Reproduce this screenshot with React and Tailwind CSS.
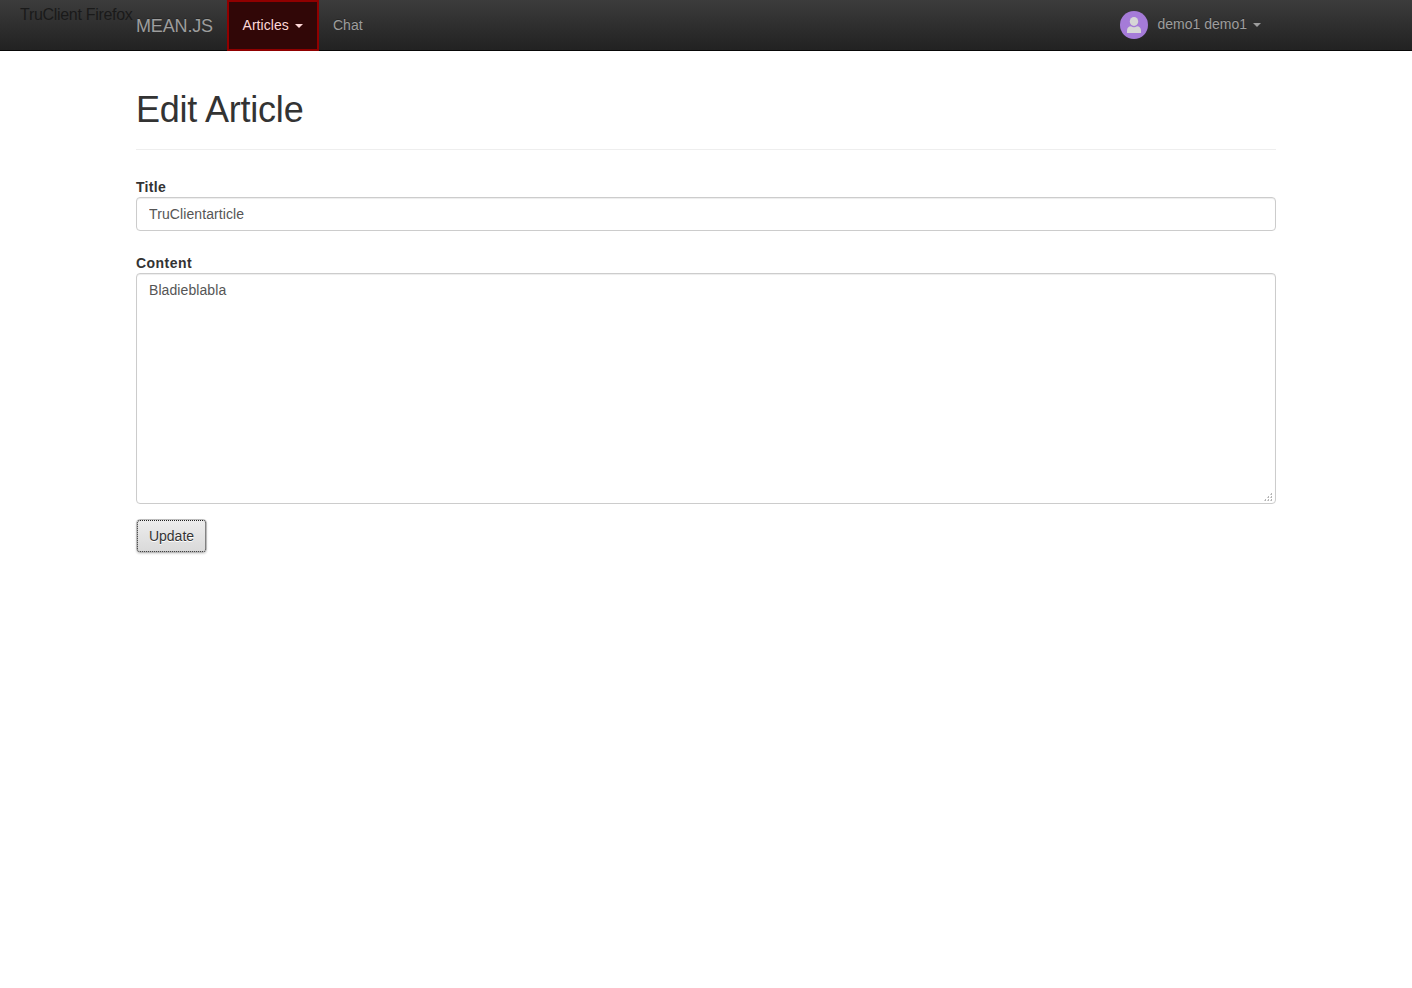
import React from "react";

function Caret() {
  return (
    <span className="ml-1.5 inline-block h-0 w-0 border-x-4 border-t-4 border-x-transparent border-t-current align-middle" />
  );
}

function Avatar() {
  return (
    <svg className="h-7 w-7" viewBox="0 0 28 28">
      <circle cx="14" cy="14" r="14" fill="#a57bd8" />
      <ellipse cx="14" cy="10.400" rx="4.200" ry="4.500" fill="#d6d6d6" />
      <path d="M7 22v-2.600C7 17 8.600 15.300 11 15.300c.8.600 1.800.900 3 .900s2.200-.3 3-.9c2.400 0 4 1.700 4 4.100V22z" fill="#d6d6d6" />
    </svg>
  );
}

function Grip() {
  return (
    <svg className="pointer-events-none absolute right-[3px] bottom-[2px] h-[9px] w-[9px]" viewBox="0 0 9 9" shapeRendering="crispEdges" fill="#b5b5b5">
      <path d="M7 0h1v2h-1zM4 3h1v2h-1zM7 3h1v2h-1zM1 6h1v2h-1zM4 6h1v2h-1zM7 6h1v2h-1z" />
      <path d="M6 1h1v1h-1zM3 4h1v1h-1zM6 4h1v1h-1zM0 7h1v1h-1zM3 7h1v1h-1zM6 7h1v1h-1z" opacity=".6" />
    </svg>
  );
}

const field =
  "block w-full rounded-[4px] border border-[#ccc] bg-white px-3 py-1.5 text-sm leading-5 text-[#555] shadow-[inset_0_1px_1px_rgba(0,0,0,0.075)] outline-none";

export default function App() {
  return (
    <div className="min-h-screen bg-white font-['Liberation_Sans',Arial,sans-serif] text-sm text-[#333]">
      <header className="relative h-[51px] border-b border-[#080808] bg-linear-to-b from-[#3c3c3c] to-[#222]">
        <span className="absolute top-[3px] left-5 text-base leading-6 tracking-[-0.3px] whitespace-nowrap text-[#1a1a1a]">TruClient Firefox</span>
        <nav className="mx-auto flex h-[51px] w-[1140px] items-start text-[#9d9d9d] [text-shadow:0_-1px_0_rgba(0,0,0,0.25)]">
          <a className="w-[91px] pt-4 text-lg leading-5 tracking-[-0.15px]">MEAN.JS</a>
          <a className="h-[51px] w-[92px] border-2 border-[#900000] bg-[#310707] pt-[13px] pl-[13.5px] leading-5 tracking-[0.06px] whitespace-nowrap text-[#ffd8d8]">
            Articles<Caret />
          </a>
          <a className="pt-[15px] pl-[14px] leading-5">Chat</a>
          <a className="mr-[15px] ml-auto flex items-start pt-[11px]">
            <Avatar />
            <span className="ml-[9px] pt-[3px] leading-5 whitespace-nowrap">
              demo1 demo1<Caret />
            </span>
          </a>
        </nav>
      </header>

      <main className="mx-auto w-[1140px] pt-[39px]">
        <div className="h-[60px] border-b border-[#eee]">
          <h1 className="text-[36px] leading-10 font-medium tracking-[-0.22px]">Edit Article</h1>
        </div>
        <form className="pt-[27px]">
          <label className="block leading-5 font-bold tracking-[0.3px]">Title</label>
          <input className={`${field} h-[34px] tracking-[0.1px]`} defaultValue="TruClientarticle" />
          <label className="mt-[22px] block leading-5 font-bold tracking-[0.45px]">Content</label>
          <div className="relative">
            <textarea className={`${field} h-[231px] resize-none tracking-[0.08px]`} defaultValue="Bladieblabla" />
            <Grip />
          </div>
          <button
            type="button"
            className="mt-[15px] h-[34px] w-[71px] rounded-[4px] border border-[#bbb] bg-linear-to-b from-[#ededed] to-[#d9d9d9] text-sm leading-5 text-[#333] shadow-[0_1px_2px_rgba(0,0,0,0.15)] outline-1 -outline-offset-2 outline-[#222] outline-dotted [text-shadow:0_1px_0_#fff]"
          >
            Update
          </button>
        </form>
      </main>
    </div>
  );
}
